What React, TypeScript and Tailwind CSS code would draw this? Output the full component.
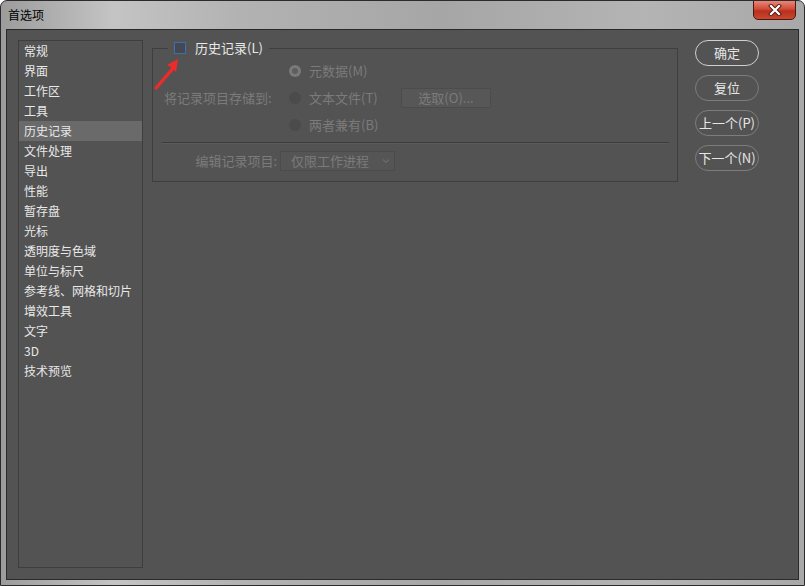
import React from "react";

const font = { fontFamily: '"Noto Sans CJK SC", "Noto Sans", sans-serif' };

const items = [
  "常规",
  "界面",
  "工作区",
  "工具",
  "历史记录",
  "文件处理",
  "导出",
  "性能",
  "暂存盘",
  "光标",
  "透明度与色域",
  "单位与标尺",
  "参考线、网格和切片",
  "增效工具",
  "文字",
  "3D",
  "技术预览",
];

function Radio({ checked }: { checked?: boolean }) {
  return checked ? (
    <span className="w-[12px] h-[12px] rounded-full bg-[#7a7a7a] flex items-center justify-center">
      <span className="w-[6px] h-[6px] rounded-full bg-[#5e5e5e]" />
    </span>
  ) : (
    <span className="w-[12px] h-[12px] rounded-full bg-[#4b4b4b]" />
  );
}

function Btn({ label, primary }: { label: string; primary?: boolean }) {
  return (
    <div
      className={`w-[64px] h-[26px] rounded-full border flex items-center justify-center text-[13px] text-[#e6e6e6] ${
        primary ? "border-[#cfcfcf]" : "border-[#7d7d7d]"
      }`}
    >
      {label}
    </div>
  );
}

export default function App() {
  return (
    <div
      className="w-[805px] h-[586px] relative overflow-hidden rounded-t-[7px] border border-[#2b2b2b] flex flex-col bg-[linear-gradient(90deg,#9c9c9c_0%,#c4c4c4_14%,#b2b2b2_30%,#a6a6a6_55%,#b4b4b4_80%,#a8a8a8_100%)]"
      style={font}
    >
      {/* title bar */}
      <div className="h-[28px] flex items-start justify-between pl-[7px] pr-[8px]">
        <div className="text-[12px] text-black leading-[28px]">首选项</div>
        <div className="mt-[-1px] w-[43px] h-[20px] rounded-b-[5px] border border-[#4a1a12] bg-[linear-gradient(180deg,#e8877a_0%,#d24a36_45%,#b8301e_55%,#c9472f_100%)] flex items-center justify-center">
          <svg width="14" height="12" viewBox="0 0 14 12">
            <path d="M3 2 L11 10 M11 2 L3 10" stroke="#4a1a12" strokeWidth="4" strokeLinecap="square" />
            <path d="M3 2 L11 10 M11 2 L3 10" stroke="#ffffff" strokeWidth="2.2" strokeLinecap="square" />
          </svg>
        </div>
      </div>

      {/* content area */}
      <div className="flex-1 ml-[5px] mr-[5px] mb-[5px] bg-[#535353] border border-[#2a2a2a] flex items-start pl-[11px] pt-[10px] text-[12px]">
        {/* list */}
        <div className="w-[125px] h-[528px] border border-[#3e3e3e] flex flex-col">
          {items.map((it, i) => (
            <div
              key={it}
              className={`h-[20px] pl-[5px] flex items-center text-[#e8e8e8] ${
                i === 4 ? "bg-[#6a6a6a]" : ""
              }`}
            >
              {it}
            </div>
          ))}
        </div>

        {/* group */}
        <fieldset className="ml-[9px] w-[526px] h-[142px] border border-[#3f3f3f] pl-[11px] pr-[8px] m-0 text-[13px]">
          <legend className="ml-[4px] px-[6px] h-[16px] flex items-center text-[#e8e8e8]">
            <span className="w-[12px] h-[12px] border border-[#3f6fae] bg-[#444850]" />
            <span className="ml-[9px]">历史记录(L)</span>
          </legend>
          <div className="mt-[1px] flex flex-col">
            <div className="grid grid-cols-[115px_1fr] text-[#7b7b7b]">
              <div />
              <div className="h-[27px] flex items-center pl-[10px]">
                <Radio checked />
                <span className="ml-[8px]">元数据(M)</span>
              </div>
              <div className="h-[27px] flex items-center">将记录项目存储到:</div>
              <div className="h-[27px] flex items-center pl-[10px]">
                <Radio />
                <span className="ml-[8px] w-[92px]">文本文件(T)</span>
                <div className="w-[90px] h-[20px] border border-[#4c4c4c] bg-[#575757] flex items-center justify-center">
                  选取(O)...
                </div>
              </div>
              <div />
              <div className="h-[27px] flex items-center pl-[10px]">
                <Radio />
                <span className="ml-[8px]">两者兼有(B)</span>
              </div>
            </div>
            <div className="mt-[4px] ml-[-2px] h-[2px] border-t border-[#3c3c3c] border-b border-b-[#5a5a5a]" />
            <div className="mt-[7px] flex items-center text-[#7b7b7b]">
              <div className="w-[113px] text-right">编辑记录项目:</div>
              <div className="ml-[3px] w-[115px] h-[20px] border border-[#4b4b4b] bg-[#555555] flex items-center justify-between pl-[10px] pr-[4px]">
                <span>仅限工作进程</span>
                <svg width="8" height="6" viewBox="0 0 8 6">
                  <path d="M1 1.5 L4 4.5 L7 1.5" stroke="#6c6c6c" strokeWidth="1.2" fill="none" />
                </svg>
              </div>
            </div>
          </div>
        </fieldset>

        {/* buttons */}
        <div className="ml-[17px] flex flex-col gap-[9px]">
          <Btn label="确定" primary />
          <Btn label="复位" />
          <Btn label="上一个(P)" />
          <Btn label="下一个(N)" />
        </div>
      </div>

      {/* red annotation arrow */}
      <svg className="absolute left-0 top-0 pointer-events-none" width="805" height="586">
        <path d="M177 58 L166 64 L170.5 66.5 L153 87 L155.5 89 L173 68.8 L175 71.5 Z" fill="#ee2b2b" />
      </svg>
    </div>
  );
}
